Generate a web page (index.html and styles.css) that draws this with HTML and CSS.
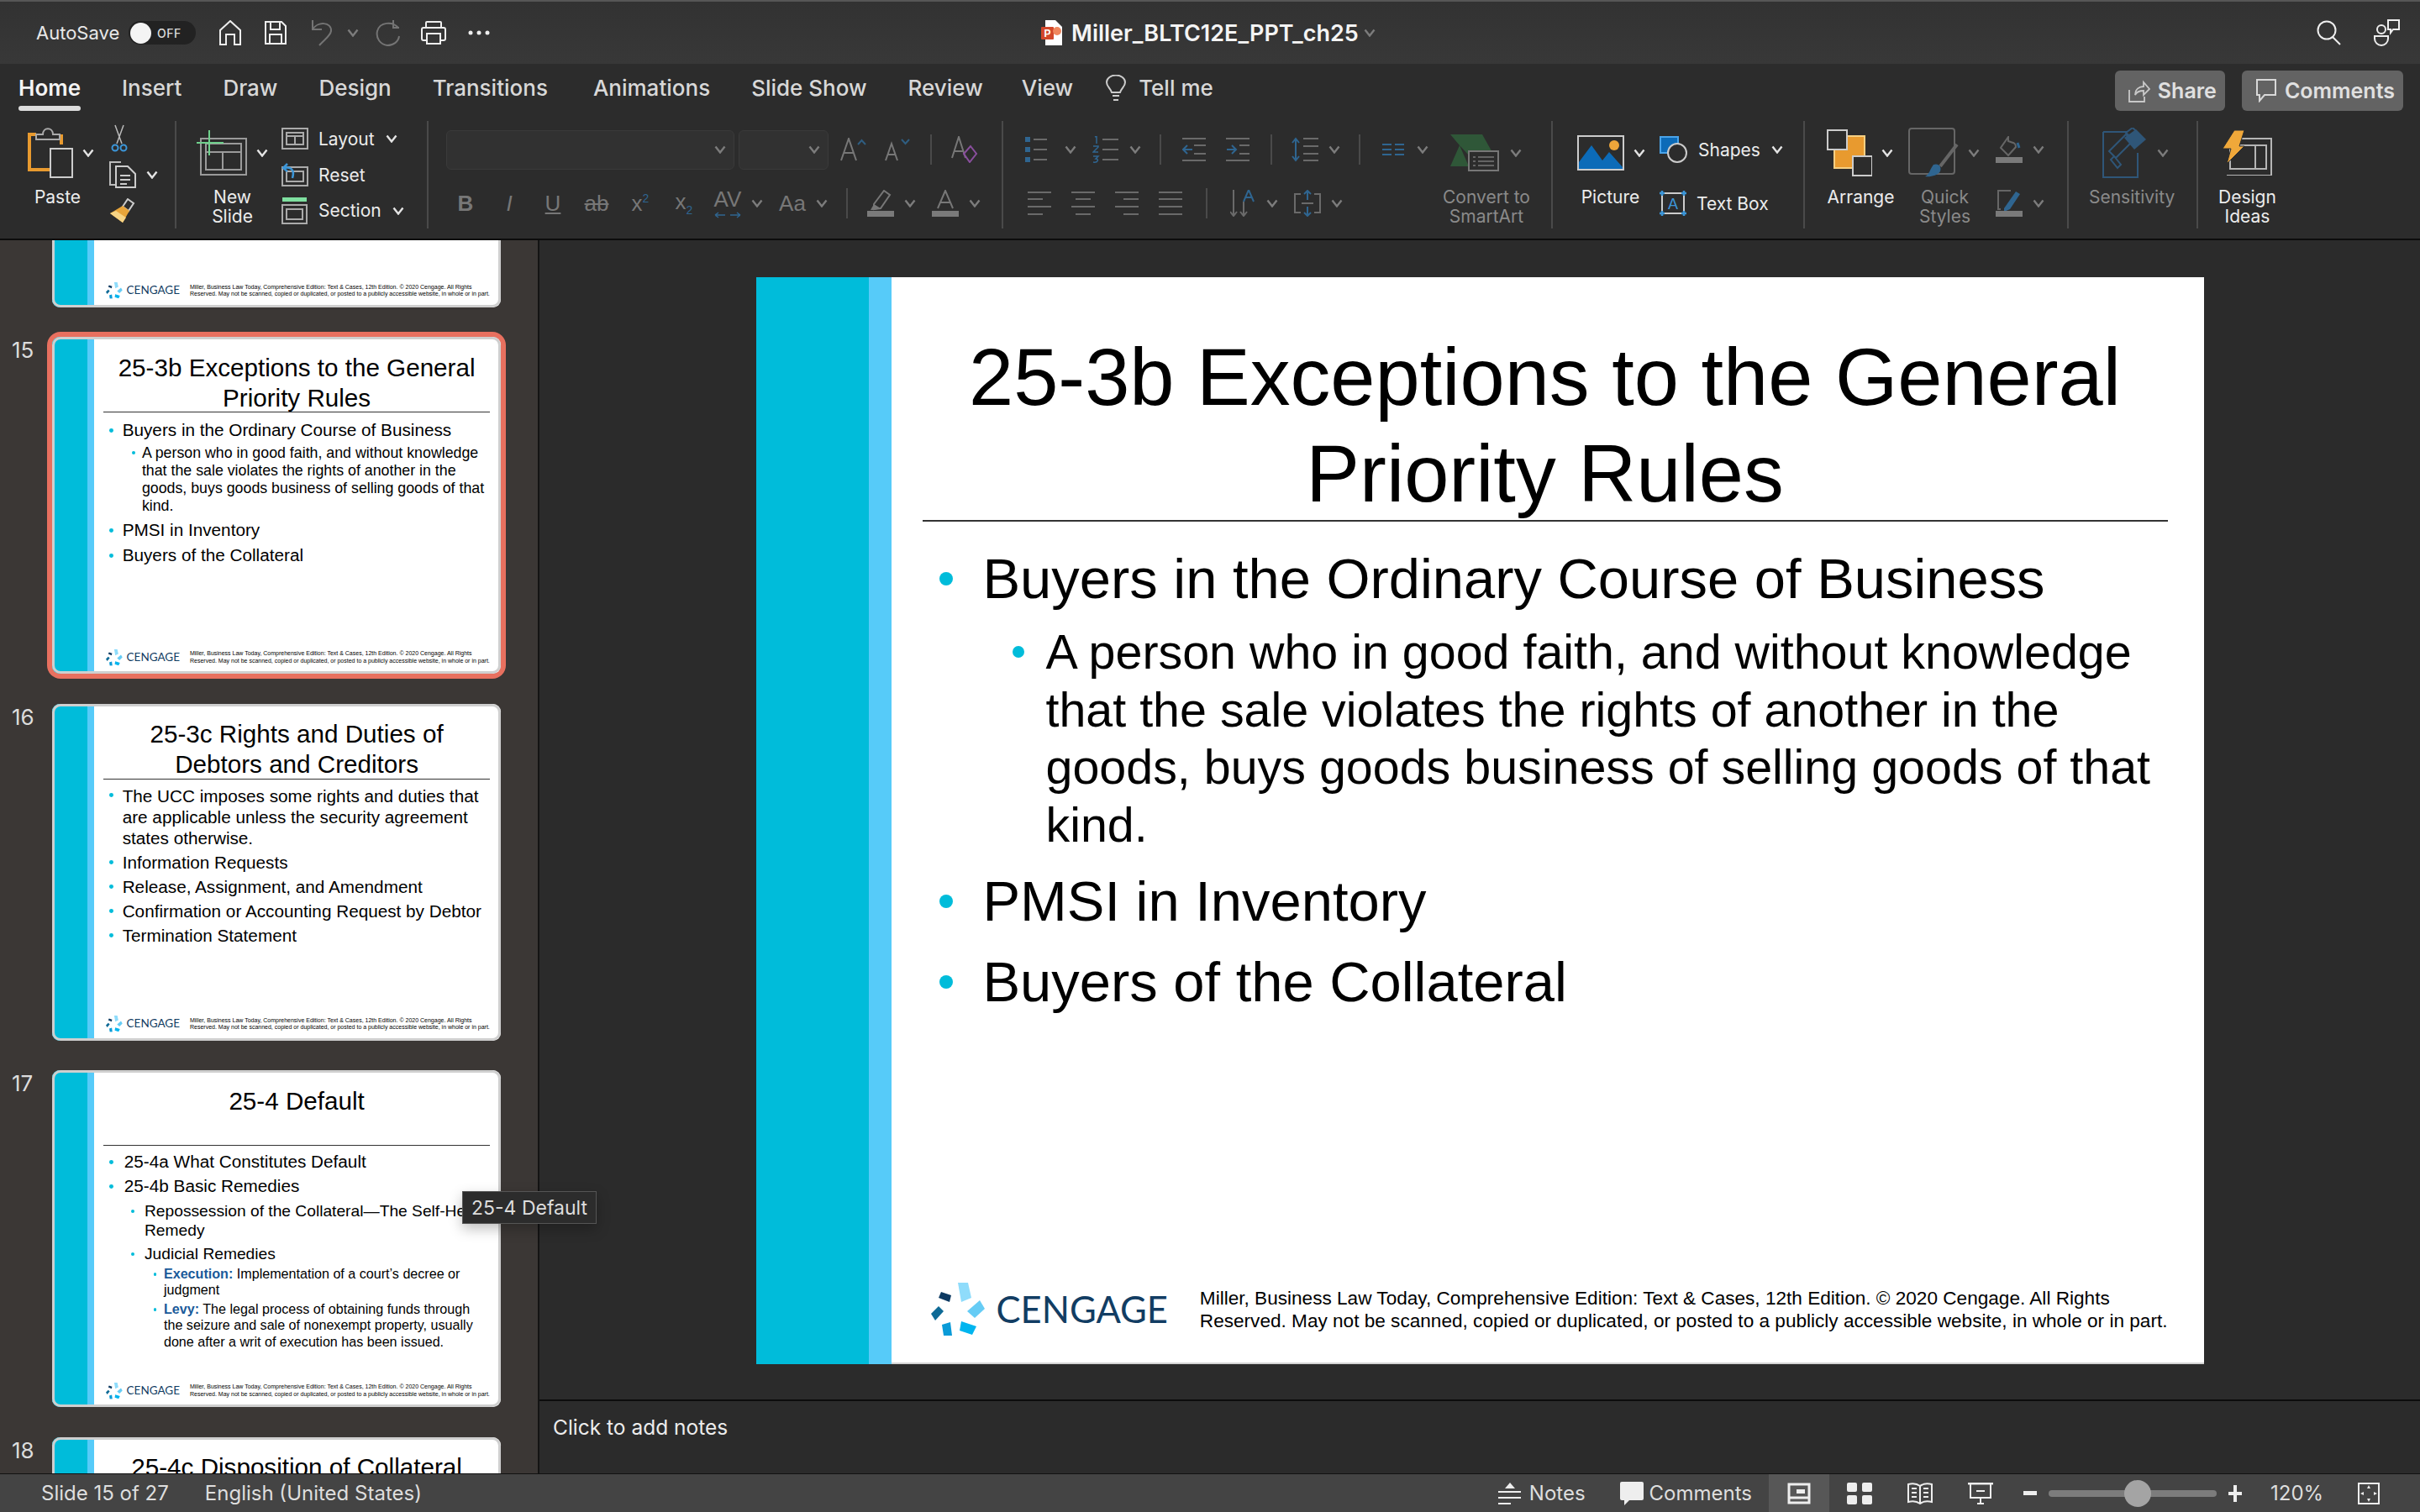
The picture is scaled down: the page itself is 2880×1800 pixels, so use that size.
FILE: index.html
```html
<!DOCTYPE html>
<html lang="en">
<head>
    <meta charset="UTF-8">
    <title>Miller_BLTC12E_PPT_ch25</title>
    <link rel="stylesheet" href="styles.css">
</head>
<body>
<svg class="sprite">
    <symbol id="chev" viewBox="0 0 14 10"><path d="M1.5 1.5 7 8.5l5.500-7" fill="none" stroke="currentColor" stroke-width="2.400"/></symbol>
    <symbol id="logo" viewBox="0 0 64 64">
        <polygon points="32,0 44,0 48,18 36,23" fill="#8fdcfb"/>
        <polygon points="43,34 58,21 64,31 52,42" fill="#66ccf5"/>
        <polygon points="36,46 54,52 49,62 34,57" fill="#00b5ef"/>
        <polygon points="13,50 23,47 25,63 15,63" fill="#0a9bd8"/>
        <polygon points="0,37 9,28 15,34 5,45" fill="#0e6a96"/>
        <polygon points="12,11 24,15 22,23 9,18" fill="#0d3a62"/>
    </symbol>
</svg>
<div class="app">
    <!-- title bar -->
    <div class="titlebar">
        <div class="qat">
            <span class="autosave">AutoSave</span>
            <span class="toggle"><i class="knob"></i><b>OFF</b></span>
            <svg class="q-home" width="28" height="30" viewBox="0 0 28 30"><path d="M2 29V12L14 1l12 11v17h-7V17h-10v12z" fill="none" stroke="#eee" stroke-width="2"/></svg>
            <svg class="q-save" width="28" height="30" viewBox="0 0 28 30"><path d="M2 2h19l5 5v21H2zM8 2v9h11V2M7 28V17h14v11" fill="none" stroke="#eee" stroke-width="2"/></svg>
            <svg class="q-undo" width="26" height="32" viewBox="0 0 26 32"><path d="M2 1v11h11M2 12C8 2 25 3 24 14c-1 6-8 10-14 17" fill="none" stroke="#747474" stroke-width="2"/></svg>
            <svg class="chev q-chev"><use href="#chev"/></svg>
            <svg class="q-redo" width="30" height="32" viewBox="0 0 30 32"><path d="M21 1v9h7M27 10C20 2 5 3 2 14c-2 9 4 16 12 17 7 0 13-4 14-11" fill="none" stroke="#747474" stroke-width="2"/></svg>
            <svg class="q-print" width="32" height="30" viewBox="0 0 32 30"><path d="M7 9V3q0-1 1-1h16q1 0 1 1v6M7 24H4q-2 0-2-2V11q0-2 2-2h24q2 0 2 2v11q0 2-2 2h-3M8 16h16v12H8z" fill="none" stroke="#eee" stroke-width="2"/></svg>
            <svg class="q-more" width="26" height="6" viewBox="0 0 26 6"><circle cx="3" cy="3" r="2.500" fill="#eee"/><circle cx="13" cy="3" r="2.500" fill="#eee"/><circle cx="23" cy="3" r="2.500" fill="#eee"/></svg>
        </div>
        <div class="doc-title">
            <svg width="26" height="30" viewBox="0 0 26 30"><path d="M5 0h12l8 8v22H5z" fill="#fff"/><rect x="0" y="8" width="15" height="15" rx="1" fill="#d2472a"/><circle cx="19" cy="13" r="5" fill="#f0875d"/><text x="3.500" y="20" font-size="12" fill="#fff" font-family="Liberation Sans">P</text></svg>
            <span>Miller_BLTC12E_PPT_ch25</span>
            <svg class="chev dim"><use href="#chev"/></svg>
        </div>
        <div class="title-right">
            <svg width="30" height="30" viewBox="0 0 30 30"><circle cx="12" cy="12" r="10.500" fill="none" stroke="#eee" stroke-width="2"/><path d="m19 20 9 9" stroke="#eee" stroke-width="2"/></svg>
            <svg width="32" height="32" viewBox="0 0 32 32"><circle cx="9" cy="12" r="5" fill="none" stroke="#eee" stroke-width="2"/><path d="M1 20h16v3a8 8 0 0 1-16 0z" fill="none" stroke="#eee" stroke-width="2"/><path d="M17 1h13v11h-7l-3 4v-4h-3z" fill="none" stroke="#eee" stroke-width="2"/></svg>
        </div>
    </div>

    <!-- tabs -->
    <div class="tabs">
        <span class="tab active">Home</span>
        <span class="tab">Insert</span>
        <span class="tab">Draw</span>
        <span class="tab">Design</span>
        <span class="tab">Transitions</span>
        <span class="tab">Animations</span>
        <span class="tab">Slide Show</span>
        <span class="tab">Review</span>
        <span class="tab">View</span>
        <svg class="bulb" width="24" height="32" viewBox="0 0 24 32"><path d="M7 21C5 15 1 14 1 9a11 8.500 0 0 1 22 0c0 5-4 6-6 12zM8 25h8M9 30h6" fill="none" stroke="#ccc" stroke-width="2"/></svg>
        <span class="tab tell">Tell me</span>
        <div class="tab-btns">
            <button class="btn share"><svg width="26" height="28" viewBox="0 0 26 28"><path d="M1 13v14h18v-6M8 19c0-7 5-10 10-10V4l7 8-7 7v-5c-4 0-8 1-10 5z" fill="none" stroke="#c8c8c8" stroke-width="1.800"/></svg>Share</button>
            <button class="btn comments"><svg width="26" height="28" viewBox="0 0 26 28"><path d="M2 1h22v18H11l-6 7v-7H2z" fill="none" stroke="#d8d8d8" stroke-width="2"/></svg>Comments</button>
        </div>
    </div>

    <!-- ribbon -->
    <div class="ribbon">
        <div class="grp g-clip">
            <div class="big paste">
                <div class="big-icon">
                    <svg width="54" height="60" viewBox="0 0 54 60"><path d="M10 8H2v42h24M40 8v12" fill="none" stroke="#e89a2f" stroke-width="4"/><path d="M10 14V8h8c0-9 12-9 12 0h8v6z" fill="none" stroke="#aaa" stroke-width="2"/><rect x="27" y="25" width="26" height="34" fill="#2c2c2c" stroke="#ccc" stroke-width="2"/></svg>
                    <svg class="chev"><use href="#chev"/></svg>
                </div>
                <span class="lbl">Paste</span>
            </div>
            <div class="stack clip-stack">
                <div class="srow"><svg width="24" height="34" viewBox="0 0 24 34"><path d="M7 1l8 22M17 1L9 23" stroke="#bbb" stroke-width="1.500"/><circle cx="7" cy="28" r="3.500" fill="none" stroke="#3c96d8" stroke-width="2"/><circle cx="17" cy="28" r="3.500" fill="none" stroke="#3c96d8" stroke-width="2"/></svg></div>
                <div class="srow"><svg width="32" height="32" viewBox="0 0 32 32"><path d="M14 1H1v27h6" fill="none" stroke="#bbb" stroke-width="2"/><path d="M8 6h14l9 9v16H8zM13 17h12M13 22h12M13 27h8" fill="none" stroke="#ccc" stroke-width="2"/></svg><svg class="chev"><use href="#chev"/></svg></div>
                <div class="srow"><svg width="32" height="30" viewBox="0 0 32 30"><path d="M22 1l7 5-6 9-7-5z" fill="none" stroke="#ccc" stroke-width="2"/><path d="M16 9l8 6-8 14-15-11z" fill="#e8a53a"/><path d="M1 18l15 11 4-6-12-8z" fill="#f7d485"/></svg></div>
            </div>
        </div>
        <div class="grp g-slide">
            <div class="big">
                <div class="big-icon">
                    <svg width="62" height="54" viewBox="0 0 62 54"><path d="M7 10h54v43H7zM13 16h42v31H13zM13 26h42M33 26v21" fill="none" stroke="#9a9a9a" stroke-width="2"/><path d="M17 0v30M2 15h32" stroke="#6fd08c" stroke-width="2"/></svg>
                    <svg class="chev"><use href="#chev"/></svg>
                </div>
                <span class="lbl">New<br>Slide</span>
            </div>
            <div class="stack slide-stack">
                <div class="srow"><svg width="32" height="26" viewBox="0 0 32 26"><path d="M1 1h30v24H1zM6 6h20v14H6zM6 10h20M16 10v10" fill="none" stroke="#aaa" stroke-width="2"/></svg><span class="txt">Layout</span><svg class="chev"><use href="#chev"/></svg></div>
                <div class="srow"><svg width="32" height="28" viewBox="0 0 32 28"><path d="M1 5h30v22H1zM6 10h20v12H6z" fill="none" stroke="#aaa" stroke-width="2"/><path d="M7 1 2 6l5 4M3 6c8-2 13 2 10 12" fill="none" stroke="#3c96d8" stroke-width="2.500"/></svg><span class="txt">Reset</span></div>
                <div class="srow"><svg width="32" height="32" viewBox="0 0 32 32"><rect x="1" y="0" width="29" height="5" fill="#7fe0a0"/><path d="M1 9h29v22H1zM6 14h19v12H6z" fill="none" stroke="#aaa" stroke-width="2"/></svg><span class="txt">Section</span><svg class="chev"><use href="#chev"/></svg></div>
            </div>
        </div>
        <div class="grp g-font">
            <div class="row">
                <div class="combo c-font"><svg class="chev dim"><use href="#chev"/></svg></div>
                <div class="combo c-size"><svg class="chev dim"><use href="#chev"/></svg></div>
                <span class="cell first-a"><svg width="32" height="28" viewBox="0 0 32 28"><path d="M1 27 10 1l9 26M5 18h10" fill="none" stroke="#777" stroke-width="2"/><path d="m21 8 4.500-5L30 8" fill="none" stroke="#2f5d80" stroke-width="2"/></svg></span>
                <span class="cell"><svg width="30" height="28" viewBox="0 0 30 28"><path d="M1 27 8 7l7 20M4 20h8" fill="none" stroke="#777" stroke-width="2"/><path d="m20 2 4.500 5L29 2" fill="none" stroke="#2f5d80" stroke-width="2"/></svg></span>
                <i class="sep"></i>
                <span class="cell"><svg width="32" height="32" viewBox="0 0 32 32"><path d="M1 26 9 1l8 25M4 18h10" fill="none" stroke="#777" stroke-width="2"/><path d="M23 12l7 9-8 10-7-10z" fill="none" stroke="#8a4f9e" stroke-width="2"/></svg></span>
            </div>
            <div class="row r2">
                <span class="cell"><b class="glyph">B</b></span>
                <span class="cell"><span class="glyph slant">I</span></span>
                <span class="cell"><u class="glyph">U</u></span>
                <span class="cell"><s class="glyph">ab</s></span>
                <span class="cell"><span class="glyph">x<sup class="blue-sub">2</sup></span></span>
                <span class="cell"><span class="glyph">x<sub class="blue-sub">2</sub></span></span>
                <span class="cell"><span class="glyph av">AV</span><svg class="av-arrows" width="32" height="8" viewBox="0 0 32 8"><path d="M1 4h12M1 4l4-3M1 4l4 3M19 4h12M31 4l-4-3M31 4l-4 3" fill="none" stroke="#2f6590" stroke-width="1.500"/></svg></span>
                <svg class="chev dim"><use href="#chev"/></svg>
                <span class="cell"><span class="glyph">Aa</span></span>
                <svg class="chev dim"><use href="#chev"/></svg>
                <i class="sep"></i>
                <span class="cell"><svg width="32" height="32" viewBox="0 0 32 32"><path d="M8 17 20 1l7 5-11 16-8 1z" fill="none" stroke="#777" stroke-width="2"/><path d="M8 17l8 5-8 2-4 0z" fill="#777"/><rect x="0" y="25" width="32" height="7" fill="#7a7a7a"/></svg></span>
                <svg class="chev dim"><use href="#chev"/></svg>
                <span class="cell"><svg width="32" height="32" viewBox="0 0 32 32"><path d="M7 22 16 1l9 21M10 15h12" fill="none" stroke="#777" stroke-width="2"/><rect x="0" y="25" width="32" height="7" fill="#7a7a7a"/></svg></span>
                <svg class="chev dim"><use href="#chev"/></svg>
            </div>
        </div>
        <div class="grp g-para">
            <div class="para-rows">
                <div class="row">
                    <span class="cell"><svg width="26" height="30" viewBox="0 0 26 30"><path d="M0 0h6v6H0zM0 12h6v6H0zM0 24h6v6H0z" fill="#2f6590"/><path d="M10 3h16M10 15h16M10 27h16" stroke="#6a6a6a" stroke-width="2"/></svg></span>
                    <svg class="chev dim far"><use href="#chev"/></svg>
                    <span class="cell"><svg width="32" height="32" viewBox="0 0 32 32"><path d="M3 1l2-1v9M1 12h6v1l-6 6h6M1 24h6l-3 3c4 0 3 5-3 4" fill="none" stroke="#2f6590" stroke-width="1.500"/><path d="M12 4h19M12 16h19M12 28h19" stroke="#6a6a6a" stroke-width="2"/></svg></span>
                    <svg class="chev dim"><use href="#chev"/></svg>
                    <i class="sep"></i>
                    <span class="cell"><svg width="28" height="28" viewBox="0 0 28 28"><path d="M0 1h28M14 9h14M14 19h14M0 27h28" stroke="#6a6a6a" stroke-width="2"/><path d="M12 14H1M6 9l-5 5 5 5" fill="none" stroke="#2f6590" stroke-width="2"/></svg></span>
                    <span class="cell"><svg width="28" height="28" viewBox="0 0 28 28"><path d="M0 1h28M16 9h12M16 19h12M0 27h28" stroke="#6a6a6a" stroke-width="2"/><path d="M1 14h11M7 9l5 5-5 5" fill="none" stroke="#2f6590" stroke-width="2"/></svg></span>
                    <i class="sep"></i>
                    <span class="cell"><svg width="32" height="30" viewBox="0 0 32 30"><path d="M14 2h18M14 11h18M14 20h18M14 28h18" stroke="#6a6a6a" stroke-width="2"/><path d="M5 2v26M1 7l4-5 4 5M1 23l4 5 4-5" fill="none" stroke="#2f6590" stroke-width="2"/></svg></span>
                    <svg class="chev dim"><use href="#chev"/></svg>
                    <i class="sep"></i>
                    <span class="cell"><svg width="26" height="16" viewBox="0 0 26 16"><path d="M0 2h11M15 2h11M0 8h11M15 8h11M0 14h11M15 14h11" stroke="#2f6590" stroke-width="2"/></svg></span>
                    <svg class="chev dim"><use href="#chev"/></svg>
                </div>
                <div class="row r2 align-row">
                    <span class="cell"><svg width="28" height="28" viewBox="0 0 28 28"><path d="M0 1h28M0 9h18M0 18h28M0 27h18" stroke="#6a6a6a" stroke-width="2"/></svg></span>
                    <span class="cell"><svg width="28" height="28" viewBox="0 0 28 28"><path d="M0 1h28M5 9h18M0 18h28M5 27h18" stroke="#6a6a6a" stroke-width="2"/></svg></span>
                    <span class="cell"><svg width="28" height="28" viewBox="0 0 28 28"><path d="M0 1h28M10 9h18M0 18h28M10 27h18" stroke="#6a6a6a" stroke-width="2"/></svg></span>
                    <span class="cell"><svg width="28" height="28" viewBox="0 0 28 28"><path d="M0 1h28M0 9h28M0 18h28M0 27h28" stroke="#6a6a6a" stroke-width="2"/></svg></span>
                    <i class="sep wide"></i>
                    <span class="cell"><svg width="30" height="32" viewBox="0 0 30 32"><path d="M4 0v31M0 26l4 5 4-5M16 14v17M12 26l4 5 4-5" fill="none" stroke="#6a6a6a" stroke-width="2"/><path d="M16 14 22 0l6 14M18 9h8" fill="none" stroke="#2f6590" stroke-width="2"/></svg></span>
                    <svg class="chev dim"><use href="#chev"/></svg>
                    <span class="cell"><svg width="32" height="32" viewBox="0 0 32 32"><path d="M8 5H1v22h7M24 5h7v22h-7M9 16h14" fill="none" stroke="#6a6a6a" stroke-width="2"/><path d="M16 1v11M12 5l4-4 4 4M16 20v11M12 27l4 4 4-4" fill="none" stroke="#2f6590" stroke-width="2"/></svg></span>
                    <svg class="chev dim"><use href="#chev"/></svg>
                </div>
            </div>
            <div class="big smartart">
                <div class="big-icon">
                    <svg width="58" height="44" viewBox="0 0 58 44"><path d="M0 0h38l14 25H22L11 13 22 38H0l11-25z" fill="#2f5738"/><rect x="22" y="20" width="35" height="23" fill="#2c2c2c" stroke="#777" stroke-width="2"/><path d="M27 27h3M33 27h19M27 32h3M33 32h19M27 37h3M33 37h19" stroke="#777" stroke-width="1.500"/></svg>
                    <svg class="chev dim"><use href="#chev"/></svg>
                </div>
                <span class="lbl off">Convert to<br>SmartArt</span>
            </div>
        </div>
        <div class="grp g-insert">
            <div class="big picture">
                <div class="big-icon">
                    <svg width="56" height="42" viewBox="0 0 56 42"><rect x="1" y="1" width="54" height="40" fill="#2c2c2c" stroke="#ccc" stroke-width="2"/><circle cx="44" cy="12" r="6" fill="#eda53a"/><path d="M2 40V32L17 12l13 18 8-10 16 18v2z" fill="#0c6bb8"/></svg>
                    <svg class="chev"><use href="#chev"/></svg>
                </div>
                <span class="lbl">Picture</span>
            </div>
            <div class="stack two">
                <div class="srow"><svg width="34" height="32" viewBox="0 0 34 32"><path d="M1 1h21v19H1z" fill="#0c6bb8" stroke="#4aa3e8" stroke-width="2"/><circle cx="21" cy="20" r="11" fill="#2c2c2c" stroke="#ccc" stroke-width="2"/></svg><span class="txt">Shapes</span><svg class="chev"><use href="#chev"/></svg></div>
                <div class="srow"><svg width="32" height="30" viewBox="0 0 32 30"><rect x="3" y="3" width="26" height="24" fill="none" stroke="#ccc" stroke-width="2"/><path d="M3 0v6M0 3h6M29 0v6M26 3h6M3 24v6M0 27h6M29 24v6M26 27h6" stroke="#3c96d8" stroke-width="2.500"/><text x="10" y="22" font-size="18" fill="#3c96d8" font-family="Liberation Sans">A</text></svg><span class="txt">Text Box</span></div>
            </div>
        </div>
        <div class="grp g-arrange">
            <div class="big arrange">
                <div class="big-icon">
                    <svg width="54" height="56" viewBox="0 0 54 56"><rect x="9" y="8" width="36" height="38" fill="#e89a2f" stroke="#f5cf83" stroke-width="2"/><rect x="1" y="1" width="23" height="23" fill="#2c2c2c" stroke="#ccc" stroke-width="2"/><rect x="31" y="32" width="23" height="23" fill="#2c2c2c" stroke="#ccc" stroke-width="2"/></svg>
                    <svg class="chev"><use href="#chev"/></svg>
                </div>
                <span class="lbl">Arrange</span>
            </div>
            <div class="big quick">
                <div class="big-icon">
                    <svg width="60" height="60" viewBox="0 0 60 60"><rect x="1" y="1" width="54" height="54" rx="3" fill="none" stroke="#666" stroke-width="2"/><path d="M58 20 38 46" stroke="#666" stroke-width="4"/><path d="M30 44c6-2 10 2 8 8-3 5-12 7-18 6 5-2 6-9 10-14z" fill="#2f6590"/></svg>
                    <svg class="chev dim"><use href="#chev"/></svg>
                </div>
                <span class="lbl off">Quick<br>Styles</span>
            </div>
            <div class="stack two">
                <div class="srow"><svg width="32" height="32" viewBox="0 0 32 32"><path d="M15 1 6 14l9 9 9-10c0-6-5-5-9-7z" fill="none" stroke="#666" stroke-width="2"/><path d="M26 8l2 6" stroke="#2f6590" stroke-width="3"/><rect x="0" y="25" width="32" height="7" fill="#7a7a7a"/></svg><svg class="chev dim"><use href="#chev"/></svg></div>
                <div class="srow"><svg width="32" height="32" viewBox="0 0 32 32"><path d="M18 1H3v22h3" fill="none" stroke="#666" stroke-width="2"/><path d="M10 22 24 2l5 3-12 18-7 3z" fill="#2f6590"/><rect x="0" y="25" width="32" height="7" fill="#7a7a7a"/></svg><svg class="chev dim"><use href="#chev"/></svg></div>
            </div>
        </div>
        <div class="grp g-sens">
            <div class="big sens">
                <div class="big-icon">
                    <svg width="54" height="60" viewBox="0 0 54 60"><path d="M1 5h28M1 5v54h41V30" fill="none" stroke="#2f5678" stroke-width="2"/><path d="M8 28 28 8l8 8-20 20zM14 34l8 10-4 4-8-10zM28 6l8-6 8 8-7 6z" fill="none" stroke="#2f5678" stroke-width="2"/><path d="M26 12l14-10 12 12-14 12z" fill="#2f5678"/></svg>
                    <svg class="chev dim"><use href="#chev"/></svg>
                </div>
                <span class="lbl off">Sensitivity</span>
            </div>
        </div>
        <div class="grp g-design">
            <div class="big design">
                <div class="big-icon">
                    <svg width="60" height="54" viewBox="0 0 60 54"><path d="M10 10h49v44H6M10 18h43v28H10zM40 18v28" fill="none" stroke="#b5b5b5" stroke-width="2"/><path d="M15 0h12l-6 19h6L6 40l5-18H1z" fill="#f0a83a" stroke="#2c2c2c" stroke-width="1"/></svg>
                </div>
                <span class="lbl">Design<br>Ideas</span>
            </div>
        </div>
    </div>

    <div class="workspace">
        <!-- slide thumbnails -->
        <aside class="thumbs">
            <div class="thumb-row">
                <span class="num"></span>
                <div class="thumb">
                    <div class="slide">
                        <i class="stripe-a"></i><i class="stripe-b"></i>
                        <div class="slide-body">
                            <div class="slide-title"></div>
                            <div class="slide-foot"><svg class="foot-logo"><use href="#logo"/></svg><span class="brand">CENGAGE</span><span class="legal">Miller, Business Law Today, Comprehensive Edition: Text &amp; Cases, 12th Edition. © 2020 Cengage. All Rights<br>Reserved. May not be scanned, copied or duplicated, or posted to a publicly accessible website, in whole or in part.</span></div>
                        </div>
                    </div>
                </div>
            </div>
            <div class="thumb-row">
                <span class="num">15</span>
                <div class="thumb selected">
                    <div class="slide">
                        <i class="stripe-a"></i><i class="stripe-b"></i>
                        <div class="slide-body">
                            <div class="slide-title">25-3b Exceptions to the General<br>Priority Rules</div>
                            <ul class="points">
                                <li class="l1"><span>Buyers in the Ordinary Course of Business</span></li>
                                <li class="l2"><span>A person who in good faith, and without knowledge<br>that the sale violates the rights of another in the<br>goods, buys goods business of selling goods of that<br>kind.</span></li>
                                <li class="l1"><span>PMSI in Inventory</span></li>
                                <li class="l1"><span>Buyers of the Collateral</span></li>
                            </ul>
                            <div class="slide-foot"><svg class="foot-logo"><use href="#logo"/></svg><span class="brand">CENGAGE</span><span class="legal">Miller, Business Law Today, Comprehensive Edition: Text &amp; Cases, 12th Edition. © 2020 Cengage. All Rights<br>Reserved. May not be scanned, copied or duplicated, or posted to a publicly accessible website, in whole or in part.</span></div>
                        </div>
                    </div>
                </div>
            </div>
            <div class="thumb-row">
                <span class="num">16</span>
                <div class="thumb">
                    <div class="slide s16">
                        <i class="stripe-a"></i><i class="stripe-b"></i>
                        <div class="slide-body">
                            <div class="slide-title">25-3c Rights and Duties of<br>Debtors and Creditors</div>
                            <ul class="points">
                                <li class="l1"><span>The UCC imposes some rights and duties that<br>are applicable unless the security agreement<br>states otherwise.</span></li>
                                <li class="l1"><span>Information Requests</span></li>
                                <li class="l1"><span>Release, Assignment, and Amendment</span></li>
                                <li class="l1"><span>Confirmation or Accounting Request by Debtor</span></li>
                                <li class="l1"><span>Termination Statement</span></li>
                            </ul>
                            <div class="slide-foot"><svg class="foot-logo"><use href="#logo"/></svg><span class="brand">CENGAGE</span><span class="legal">Miller, Business Law Today, Comprehensive Edition: Text &amp; Cases, 12th Edition. © 2020 Cengage. All Rights<br>Reserved. May not be scanned, copied or duplicated, or posted to a publicly accessible website, in whole or in part.</span></div>
                        </div>
                    </div>
                </div>
            </div>
            <div class="thumb-row">
                <span class="num">17</span>
                <div class="thumb">
                    <div class="slide s17">
                        <i class="stripe-a"></i><i class="stripe-b"></i>
                        <div class="slide-body">
                            <div class="slide-title">25-4 Default</div>
                            <ul class="points">
                                <li class="l1"><span>25-4a What Constitutes Default</span></li>
                                <li class="l1"><span>25-4b Basic Remedies</span></li>
                                <li class="l2"><span>Repossession of the Collateral—The Self-Help<br>Remedy</span></li>
                                <li class="l2"><span>Judicial Remedies</span></li>
                                <li class="l3"><span><b>Execution:</b> Implementation of a court’s decree or<br>judgment</span></li>
                                <li class="l3 levy"><span><b>Levy:</b> The legal process of obtaining funds through<br>the seizure and sale of nonexempt property, usually<br>done after a writ of execution has been issued.</span></li>
                            </ul>
                            <div class="slide-foot"><svg class="foot-logo"><use href="#logo"/></svg><span class="brand">CENGAGE</span><span class="legal">Miller, Business Law Today, Comprehensive Edition: Text &amp; Cases, 12th Edition. © 2020 Cengage. All Rights<br>Reserved. May not be scanned, copied or duplicated, or posted to a publicly accessible website, in whole or in part.</span></div>
                        </div>
                    </div>
                </div>
            </div>
            <div class="thumb-row">
                <span class="num">18</span>
                <div class="thumb">
                    <div class="slide">
                        <i class="stripe-a"></i><i class="stripe-b"></i>
                        <div class="slide-body">
                            <div class="slide-title">25-4c Disposition of Collateral</div>
                        </div>
                    </div>
                </div>
            </div>
        </aside>

        <!-- editor -->
        <main class="editor">
            <div class="stage">
                <div class="slide main-slide">
                    <i class="stripe-a"></i><i class="stripe-b"></i>
                    <div class="slide-body">
                        <div class="slide-title">25-3b Exceptions to the General<br>Priority Rules</div>
                        <ul class="points">
                            <li class="l1"><span>Buyers in the Ordinary Course of Business</span></li>
                            <li class="l2"><span>A person who in good faith, and without knowledge<br>that the sale violates the rights of another in the<br>goods, buys goods business of selling goods of that<br>kind.</span></li>
                            <li class="l1"><span>PMSI in Inventory</span></li>
                            <li class="l1"><span>Buyers of the Collateral</span></li>
                        </ul>
                        <div class="slide-foot"><svg class="foot-logo"><use href="#logo"/></svg><span class="brand">CENGAGE</span><span class="legal">Miller, Business Law Today, Comprehensive Edition: Text &amp; Cases, 12th Edition. © 2020 Cengage. All Rights<br>Reserved. May not be scanned, copied or duplicated, or posted to a publicly accessible website, in whole or in part.</span></div>
                    </div>
                </div>
            </div>
            <div class="notes">Click to add notes</div>
        </main>
    </div>

    <!-- status bar -->
    <footer class="statusbar">
        <span class="st-slide">Slide 15 of 27</span>
        <span class="st-lang">English (United States)</span>
        <div class="st-right">
            <svg width="28" height="26" viewBox="0 0 28 26"><path d="M14 0l6 7H8z" fill="#eee"/><path d="M0 11h27M0 18h27M0 25h15" stroke="#eee" stroke-width="2"/></svg>
            <span class="st-notes">Notes</span>
            <svg class="st-cicon" width="28" height="28" viewBox="0 0 28 28"><path d="M2 0h24q2 0 2 2v18q0 2-2 2H11l-6 6v-6H2q-2 0-2-2V2q0-2 2-2z" fill="#eee"/></svg>
            <span class="st-comments">Comments</span>
            <span class="view active"><svg width="28" height="26" viewBox="0 0 28 26"><path d="M2 2h24v22H2zM2 18h24" fill="none" stroke="#eee" stroke-width="3"/><rect x="11" y="8" width="10" height="5" fill="#eee"/></svg></span>
            <span class="view"><svg width="30" height="26" viewBox="0 0 30 26"><rect x="0" y="0" width="12" height="11" rx="2" fill="#eee"/><rect x="18" y="0" width="12" height="11" rx="2" fill="#eee"/><rect x="0" y="15" width="12" height="11" rx="2" fill="#eee"/><rect x="18" y="15" width="12" height="11" rx="2" fill="#eee"/></svg></span>
            <span class="view"><svg width="30" height="26" viewBox="0 0 30 26"><path d="M15 4C11 1 5 1 1 2v21c4-1 10-1 14 2 4-3 10-3 14-2V2c-4-1-10-1-14 2zM15 4v21M5 7h6M5 12h6M5 17h6M19 7h6M19 12h6M19 17h6" fill="none" stroke="#eee" stroke-width="2"/></svg></span>
            <span class="view"><svg width="30" height="26" viewBox="0 0 30 26"><path d="M0 1h30" stroke="#eee" stroke-width="3"/><path d="M3 2v16h24V2M15 18v6M11 25h8M10 10h10" fill="none" stroke="#eee" stroke-width="2"/></svg></span>
            <i class="zoom-minus"></i>
            <div class="slider"><i class="slider-knob"></i></div>
            <svg class="zoom-plus" width="16" height="20" viewBox="0 0 16 20"><path d="M0 10h16M8 0v20" stroke="#eee" stroke-width="4"/></svg>
            <span class="st-pct">120%</span>
            <svg class="st-fit" width="26" height="26" viewBox="0 0 26 26"><rect x="1" y="1" width="24" height="24" fill="none" stroke="#eee" stroke-width="2"/><path d="M13 3l-2 4h4zM13 23l-2-4h4zM3 13l4-2v4zM23 13l-4-2v4z" fill="#eee"/></svg>
        </div>
    </footer>

    <div class="tooltip">25-4 Default</div>
</div>
</body>
</html>
```

FILE: styles.css
```css
* { box-sizing: border-box; }
html, body { margin: 0; padding: 0; }
body { width: 2880px; height: 1800px; overflow: hidden; background: #2b2b2b; font-family: Inter, "Liberation Sans", sans-serif; color: #e6e6e6; }
.sprite { display: none; }
.app { position: relative; width: 2880px; height: 1800px; display: flex; flex-direction: column; }
svg { display: block; flex: none; }
.chev { width: 14px; height: 10px; color: #e4e4e4; flex: none; margin: 0 2px; }
.chev.dim { color: #7c7c7c; }

/* title bar */
.titlebar { height: 76px; display: flex; align-items: center; background: linear-gradient(#323232, #383838); border-top: 2px solid #565656; }
.qat { display: flex; align-items: center; padding-left: 43px; width: 1239px; flex: none; }
.autosave { font-size: 22px; width: 110px; color: #e8e8e8; }
.toggle { width: 80px; height: 28px; border-radius: 14px; background: #222; display: flex; align-items: center; }
.knob { width: 25px; height: 25px; border-radius: 50%; background: #f4f4f4; margin-left: 2px; }
.toggle b { font-size: 14px; font-weight: 500; margin-left: 7px; color: #ddd; letter-spacing: .5px; }
.q-home { margin-left: 27px; }
.q-save { margin-left: 26px; }
.q-undo { margin-left: 28px; }
.qat .q-chev { margin: 0 0 0 17px; color: #7c7c7c; }
.q-redo { margin-left: 20px; }
.q-print { margin-left: 23px; }
.q-more { margin-left: 25px; }
.doc-title { display: flex; align-items: center; gap: 10px; font-size: 27px; font-weight: 600; color: #f4f4f4; }
.doc-title .chev { margin-left: -4px; }
.title-right { display: flex; align-items: center; gap: 38px; padding-right: 23px; margin-left: auto; }

/* tabs */
.tabs { height: 64px; display: flex; align-items: center; padding: 0 0 6px 22px; background: #2c2c2c; }
.tab { font-size: 26px; font-weight: 500; color: #d8d8d8; margin-right: 49px; line-height: 58px; height: 58px; }
.tab:nth-child(5) { margin-right: 54px; }
.tab:nth-child(8) { margin-right: 46px; }
.tab.active { color: #f4f4f4; font-weight: 600; position: relative; }
.tab.active::after { content: ""; position: absolute; left: 0; right: 0; top: 50px; height: 6px; border-radius: 3px; background: #dcdcdc; }
.bulb { margin-left: -10px; margin-right: 15px; }
.tab.tell { margin-right: 0; }
.tab-btns { margin-left: auto; margin-top: 6px; display: flex; gap: 20px; padding-right: 20px; }
.btn { height: 48px; border: 0; border-radius: 6px; background: #636363; color: #e0e0e0; font: 600 25px Inter, "Liberation Sans", sans-serif; display: flex; align-items: center; gap: 9px; padding: 0 10px 0 16px; }

/* ribbon */
.ribbon { height: 146px; display: flex; background: #2c2c2c; border-bottom: 2px solid #0c0c0c; padding-bottom: 16px; }
.grp { display: flex; flex: none; border-right: 2px solid #4a4a4a; height: 128px; margin-top: 4px; }
.g-clip { width: 210px; padding-left: 33px; }
.g-slide { width: 300px; padding-left: 22px; }
.g-font { width: 684px; padding-left: 18px; flex-direction: column; }
.g-para { width: 654px; }
.g-insert { width: 300px; padding-left: 28px; }
.g-arrange { width: 314px; padding-left: 26px; }
.g-sens { width: 154px; padding-left: 24px; }
.g-design { width: 200px; padding-left: 24px; border-right: 0; }

.big { display: flex; flex-direction: column; align-items: center; padding-top: 6px; flex: none; height: 138px; }
.big-icon { display: flex; align-items: center; gap: 9px; height: 64px; }
.lbl { display: block; margin-top: 9px; font-size: 21px; line-height: 23px; text-align: center; color: #ececec; white-space: nowrap; }
.lbl.off { color: #8a8a8a; }
.paste .lbl { margin-right: 10px; }
.picture .lbl { margin-right: 3px; }
.smartart { width: 120px; margin-left: 5px; }
.smartart .big-icon { gap: 11px; }
.quick { margin-left: 16px; }
.clip-stack { margin-left: 14px; }
.slide-stack { margin-left: 14px; }
.picture { width: 84px; }
.sens .big-icon { margin-left: 10px; }

.stack { display: flex; flex-direction: column; flex: none; }
.srow { display: flex; align-items: center; height: 44px; }
.slide-stack .srow { height: 45px; }
.srow .txt { margin-left: 12px; margin-right: 11px; font-size: 21px; color: #ececec; white-space: nowrap; }
.stack.two { margin-left: 15px; padding-top: 12px; gap: 20px; }
.g-arrange .stack.two { margin-left: 17px; }
.clip-stack .srow .chev, .stack.two .srow .chev { margin-left: 12px; }
.stack.two .srow .txt + .chev { margin-left: 2px; }
.clip-stack .srow svg:first-child { margin-left: 2px; }

.row { display: flex; align-items: center; height: 48px; margin-top: 10px; }
.row.r2 { margin-top: 16px; }
.cell { width: 52px; height: 44px; flex: none; display: flex; align-items: center; justify-content: center; position: relative; }
.row .chev { width: 18px; margin: 0; padding: 0 2px; }
.row .chev + .cell, .row .chev + .chev { margin-left: 7px; }
.row .chev.far { margin-left: 6px; }
.sep { width: 2px; height: 36px; margin: 0 13px; background: #4a4a4a; flex: none; }
.row .chev + .sep { margin-left: 20px; }
.sep.wide { margin: 0 16px; }
.combo { height: 47px; border: 1px solid #3a3a3a; border-radius: 6px; background: #313131; display: flex; align-items: center; justify-content: flex-end; padding-right: 7px; flex: none; }
.c-font { width: 343px; margin-left: 3px; margin-right: 5px; }
.c-size { width: 107px; margin-right: 4px; }
.glyph { font-size: 26px; color: #777; font-family: "Liberation Sans", sans-serif; line-height: 1; }
.glyph.slant { font-style: italic; }
.glyph.av { font-size: 26px; margin-top: -10px; }
.blue-sub { font-size: 14px; color: #2f6590; }
.av-arrows { position: absolute; left: 10px; bottom: 4px; }
.para-rows { width: 510px; padding-left: 13px; }
.align-row { padding-left: 4px; }

/* thumbnails */
.workspace { flex: 1; min-height: 0; display: flex; position: relative; }
.thumbs { width: 642px; flex: none; background: #3b3735; border-right: 2px solid #141414; overflow: hidden; }
.thumb-row { display: flex; height: 436.500px; }
.thumb-row:first-child { margin-top: -321.500px; }
.num { width: 62px; padding-left: 14px; font-size: 26px; line-height: 32px; color: #dcdcdc; flex: none; }
.thumb { position: relative; width: 534px; height: 401px; border-radius: 10px; }
.thumb .slide { zoom: 0.31; border-radius: 30px; overflow: hidden; }
.thumb::after { content: ""; position: absolute; inset: 0; border: 3px solid #cfcfcf; border-radius: 10px; }
.thumb.selected { box-shadow: 0 0 0 6px #e8705f; }

/* slide */
.slide { width: 1723px; height: 1294px; display: flex; background: #fff; font-family: "Liberation Sans", Arial, sans-serif; color: #000; }
.stripe-a { width: 134px; background: #00bcda; flex: none; }
.stripe-b { width: 27px; background: #56cbf9; flex: none; }
.slide-body { flex: 1; min-width: 0; display: flex; flex-direction: column; padding: 0 43px 0 37px; }
.slide-title { flex: none; height: 291px; padding-top: 61px; border-bottom: 2px solid #333; font-size: 95.600px; line-height: 115px; text-align: center; white-space: nowrap; }
.points { list-style: none; margin: 0; padding: 12px 0 0; }
.points li { display: flex; align-items: flex-start; white-space: nowrap; }
.points li::before { content: ""; flex: none; border-radius: 50%; background: #00bcda; }
.l1 { font-size: 66.900px; line-height: 80px; margin-top: 16px; padding-left: 20px; }
.l1::before { width: 16px; height: 16px; margin: 32px 36px 0 0; }
.l2 { font-size: 57.400px; line-height: 68.500px; margin-top: 13px; padding-left: 107px; }
.l2::before { width: 14px; height: 14px; margin: 27px 26px 0 0; }
.l2 + .l1 { margin-top: 17px; }
.slide-foot { margin-top: auto; display: flex; align-items: center; height: 64px; margin-bottom: 31px; padding-left: 10px; flex: none; }
.foot-logo { width: 64px; height: 64px; }
.brand { font-family: Lato, "Open Sans", sans-serif; font-size: 43.500px; color: #123d63; margin-left: 14px; line-height: 1; }
.legal { margin-left: auto; font-size: 22.600px; line-height: 27px; white-space: nowrap; color: #000; }
.main-slide .slide-body { border-bottom: 2px solid #d4d4d4; }

/* slide 16 and 17 have their own spacing */
.s16 .points { padding-top: 9px; }
.s16 .l1 { line-height: 81px; margin-top: 13px; }
.s17 .points { padding-top: 5px; }
.s17 .l1 { line-height: 80px; margin-top: 16px; }
.s17 .l1::before { margin-right: 43px; }
.s17 .l2 { font-size: 62px; line-height: 76px; margin-top: 13px; padding-left: 105px; }
.s17 .l1 + .l2 { margin-top: 15px; }
.s17 .l2::before { margin: 31px 38px 0 0; }
.l3 { font-size: 52px; line-height: 62px; margin-top: 8px; padding-left: 191px; }
.l3::before { width: 12px; height: 12px; margin: 25px 28px 0 0; }
.l3 b { color: #1a5a9a; }
.l3.levy { margin-top: 12px; }

/* editor */
.editor { flex: 1; min-width: 0; display: flex; flex-direction: column; background: #2b2b2b; }
.stage { height: 1382px; padding-top: 2px; display: flex; align-items: center; justify-content: center; border-bottom: 2px solid #0c0c0c; }
.notes { flex: 1; padding: 15px 0 0 16px; font-size: 24.500px; line-height: 32px; color: #ececec; }

/* status bar */
.statusbar { height: 46px; display: flex; align-items: center; background: #444; border-top: 1px solid #111; padding-left: 49px; font-size: 24px; color: #dedede; flex: none; }
.st-lang { margin-left: 43px; }
.st-right { margin-left: auto; display: flex; align-items: center; height: 100%; padding-right: 48px; }
.st-notes { margin-left: 9px; }
.st-cicon { margin-left: 41px; }
.st-comments { margin-left: 7px; }
.view { width: 72px; height: 100%; display: flex; align-items: center; justify-content: center; }
.view.active { background: #575757; margin-left: 20px; }
.zoom-minus { width: 16px; height: 5px; margin-left: 15px; background: #eee; flex: none; }
.slider { position: relative; width: 200px; height: 8px; margin-left: 14px; border-radius: 4px; background: #7c7c7c; }
.slider-knob { position: absolute; left: 90px; top: -12px; width: 32px; height: 32px; border-radius: 50%; background: #a4a4a4; }
.zoom-plus { margin-left: 14px; }
.st-pct { width: 63px; margin-left: 34px; white-space: nowrap; }
.st-fit { margin-left: 41px; }

.tooltip { position: absolute; left: 550px; top: 1418px; width: 160px; height: 39px; display: flex; align-items: center; justify-content: center; background: #2c2c2c; border: 1px solid #555; font-size: 23px; color: #ddd; box-shadow: 0 6px 16px rgba(0,0,0,.25); white-space: nowrap; }
```
